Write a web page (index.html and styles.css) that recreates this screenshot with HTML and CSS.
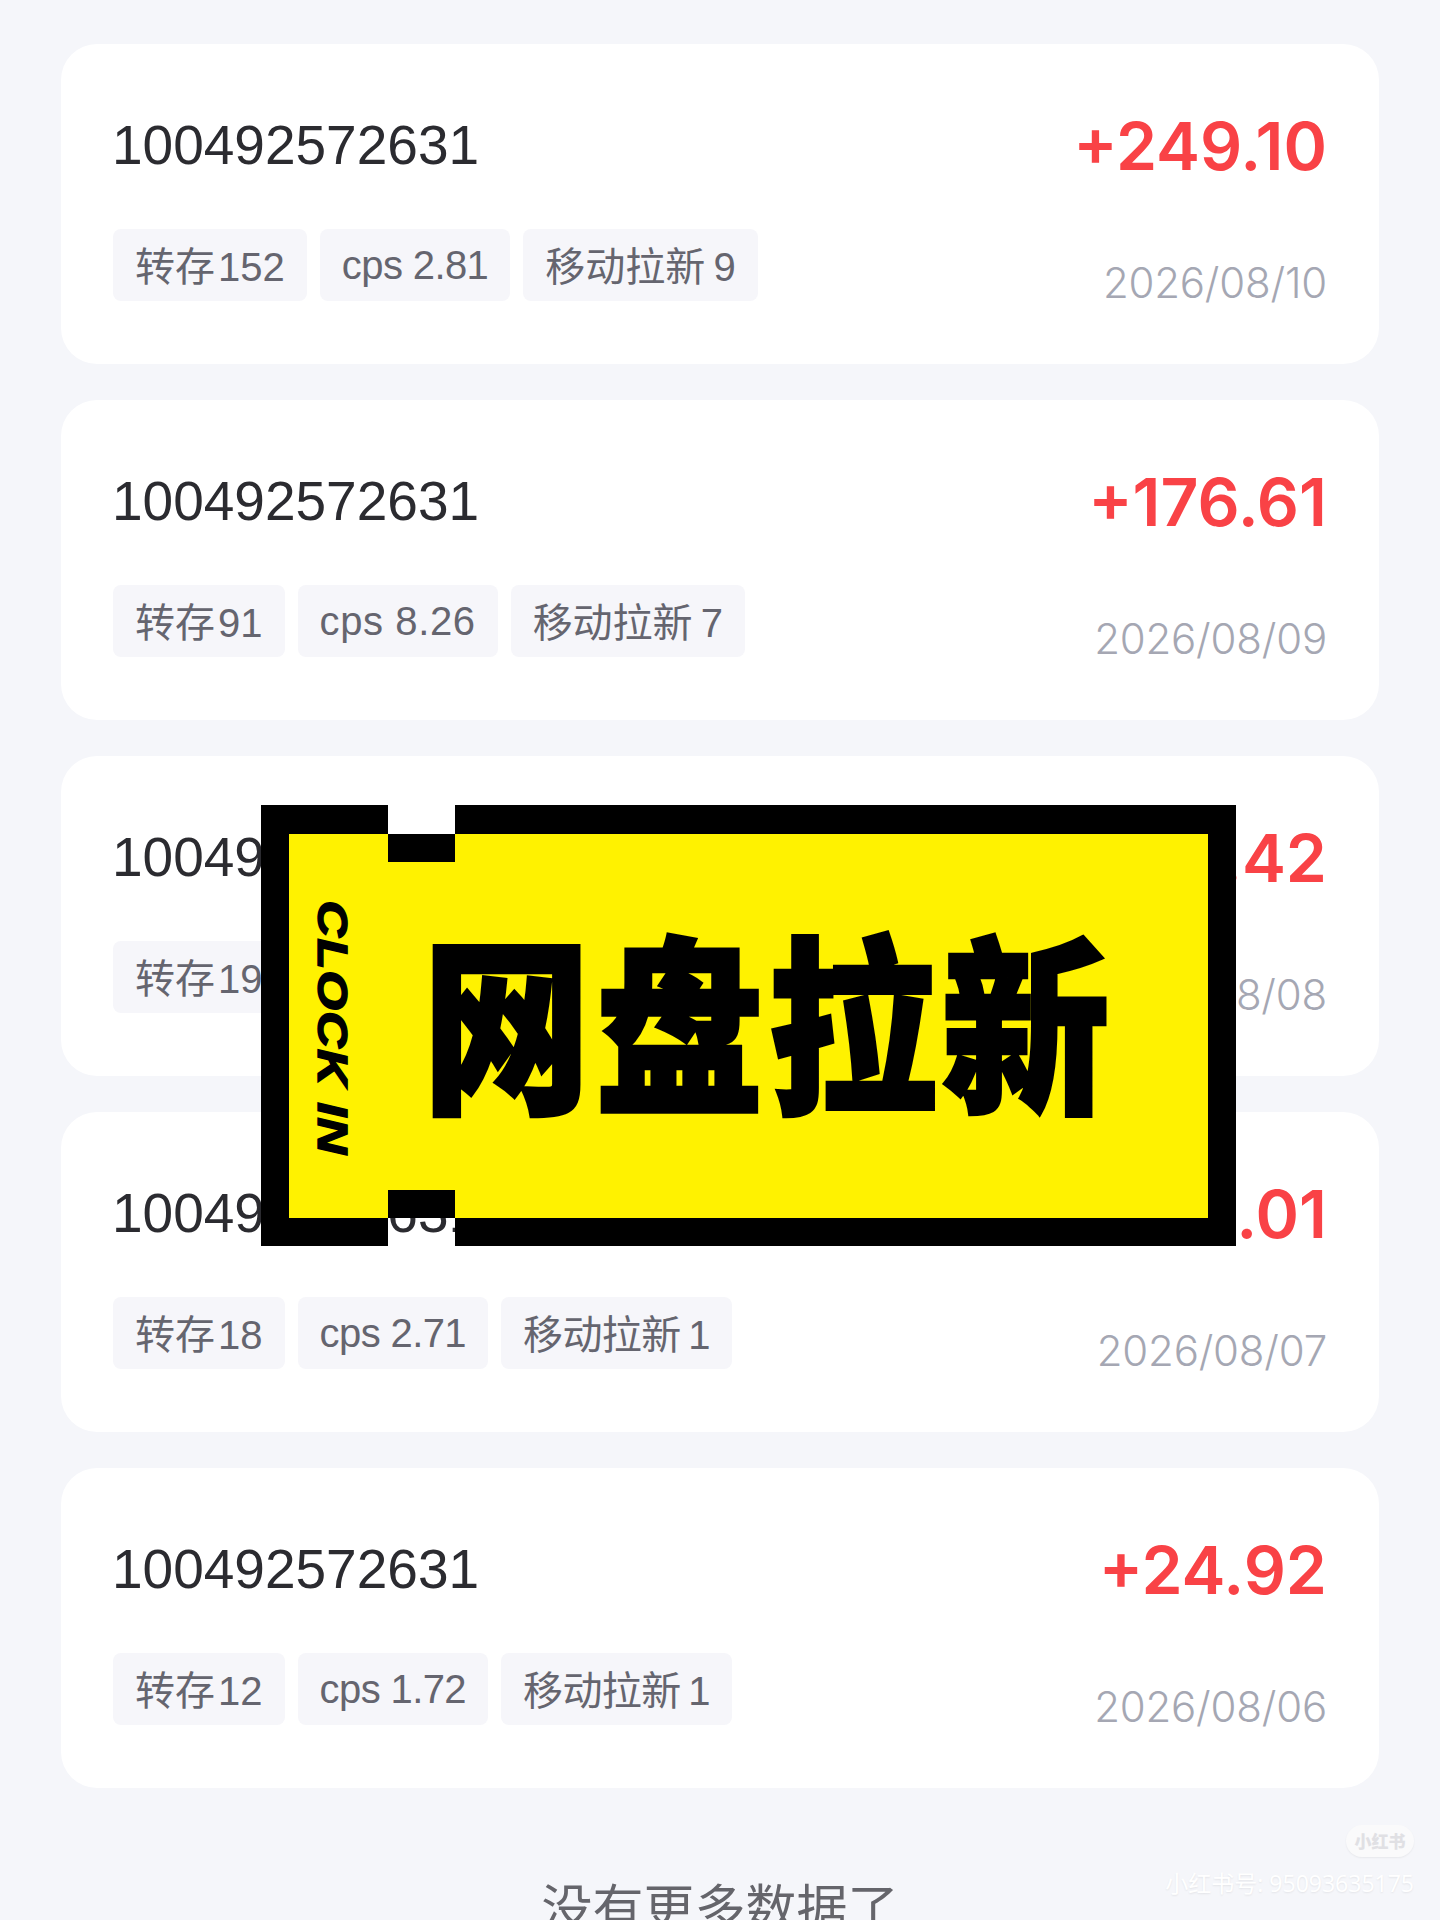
FILE: index.html
```html
<!DOCTYPE html>
<html lang="zh-CN">
<head>
    <meta charset="UTF-8">
    <meta name="viewport" content="width=device-width, initial-scale=1.0">
    <title>网盘拉新</title>
    <link rel="stylesheet" href="styles.css">
</head>
<body>
    <div class="page">
        <div class="list">
            <div class="card">
                <div class="row">
                    <span class="code">100492572631</span>
                    <span class="amount">+249.10</span>
                </div>
                <div class="row row-bottom">
                    <div class="tags">
                        <span class="tag tag-save">转存 152</span>
                        <span class="tag tag-cps tag-tight">cps 2.81</span>
                        <span class="tag tag-new">移动拉新 9</span>
                    </div>
                    <span class="date">2026/08/10</span>
                </div>
            </div>

            <div class="card">
                <div class="row">
                    <span class="code">100492572631</span>
                    <span class="amount">+176.61</span>
                </div>
                <div class="row row-bottom">
                    <div class="tags">
                        <span class="tag tag-save">转存 91</span>
                        <span class="tag tag-cps tag-wide">cps 8.26</span>
                        <span class="tag tag-new">移动拉新 7</span>
                    </div>
                    <span class="date">2026/08/09</span>
                </div>
            </div>

            <div class="card">
                <div class="row">
                    <span class="code">100492572631</span>
                    <span class="amount">+58.42</span>
                </div>
                <div class="row row-bottom">
                    <div class="tags">
                        <span class="tag tag-save">转存 19</span>
                        <span class="tag tag-cps">cps 3.07</span>
                        <span class="tag tag-new">移动拉新 2</span>
                    </div>
                    <span class="date">2026/08/08</span>
                </div>
            </div>

            <div class="card">
                <div class="row">
                    <span class="code">100492572631</span>
                    <span class="amount">+49.01</span>
                </div>
                <div class="row row-bottom">
                    <div class="tags">
                        <span class="tag tag-save">转存 18</span>
                        <span class="tag tag-cps tag-tight">cps 2.71</span>
                        <span class="tag tag-new tag-tight">移动拉新 1</span>
                    </div>
                    <span class="date">2026/08/07</span>
                </div>
            </div>

            <div class="card">
                <div class="row">
                    <span class="code">100492572631</span>
                    <span class="amount">+24.92</span>
                </div>
                <div class="row row-bottom">
                    <div class="tags">
                        <span class="tag tag-save">转存 12</span>
                        <span class="tag tag-cps tag-tight">cps 1.72</span>
                        <span class="tag tag-new tag-tight">移动拉新 1</span>
                    </div>
                    <span class="date">2026/08/06</span>
                </div>
            </div>
        </div>

        <div class="no-more">没有更多数据了</div>

        <!-- Ticket sticker over the list -->
        <div class="sticker">
            <div class="sticker-inner">
                <span class="notch notch-top"></span>
                <span class="notch notch-bottom"></span>
                <span class="clock-in">CLOCK IN</span>
                <span class="sticker-title">网盘拉新</span>
            </div>
        </div>

        <!-- Watermark -->
        <div class="mark-logo">小红书</div>
        <div class="mark-id">小红书号: 95093635175</div>
    </div>
</body>
</html>
```

FILE: styles.css
```css
/* Basic Styling */
body {
    margin: 0;
    background-color: #f5f6fa;
    font-family: 'Liberation Sans', 'Noto Sans CJK SC', sans-serif;
}

.page {
    position: relative;
    height: 1920px;
    overflow: hidden;
}

.list {
    display: flex;
    flex-direction: column;
    gap: 36px;
    padding: 44px 61px 0;
}

.card {
    height: 320px;
    box-sizing: border-box;
    padding: 62px 52px 0;
    background-color: #fff;
    border-radius: 36px;
}

.row {
    display: flex;
    justify-content: space-between;
    align-items: center;
    height: 78px;
}

.row-bottom {
    height: 72px;
    margin-top: 45px;
    align-items: flex-start;
}

.code {
    margin-left: -1px;
    font-size: 55px;
    color: #2b2b30;
}

.amount {
    margin-top: 2px;
    font-family: Inter, sans-serif;
    font-size: 66px;
    font-weight: 600;
    color: #f94246;
}

/* Tags */
.tags {
    display: flex;
    gap: 13px;
}

.tag {
    display: flex;
    align-items: center;
    height: 72px;
    box-sizing: border-box;
    padding: 0 22px 3px;
    border-radius: 8px;
    background-color: #f6f6fa;
    font-size: 40px;
    color: #65656f;
}

.tag-save {
    word-spacing: -8px;
}

.tag-new {
    word-spacing: -3px;
}

.tag-cps {
    padding-bottom: 0;
}

.tag-tight {
    letter-spacing: -0.6px;
}

.tag-wide {
    letter-spacing: 0.6px;
}

.date {
    margin-top: 28px;
    font-family: Inter, sans-serif;
    font-size: 42px;
    font-weight: 300;
    letter-spacing: -0.2px;
    color: #a5a7b3;
}

.no-more {
    margin-top: 92px;
    text-align: center;
    font-size: 51px;
    line-height: 60px;
    color: #65656b;
}

/* Sticker */
.sticker {
    position: absolute;
    left: 261px;
    top: 805px;
    width: 975px;
    height: 441px;
    box-sizing: border-box;
    padding: 29px 28px 28px;
    background-color: #000;
    clip-path: polygon(0 0, 127px 0, 127px 29px, 194px 29px, 194px 0, 100% 0, 100% 100%, 194px 100%, 194px 413px, 127px 413px, 127px 100%, 0 100%);
}

.sticker-inner {
    position: relative;
    display: flex;
    align-items: center;
    height: 100%;
    background-color: #fff200;
}

.notch {
    position: absolute;
    left: 99px;
    width: 67px;
    height: 28px;
    background-color: #000;
}

.notch-top {
    top: 0;
}

.notch-bottom {
    bottom: 0;
}

.clock-in {
    writing-mode: vertical-rl;
    margin: 4px 0 0 19px;
    font-family: 'Liberation Sans', sans-serif;
    font-size: 43px;
    font-weight: 700;
    font-style: italic;
    letter-spacing: 1px;
    -webkit-text-stroke: 1.5px #000;
    color: #000;
    transform: scaleY(1.18);
}

.sticker-title {
    margin: 0 0 20px 66px;
    font-family: 'Noto Sans CJK SC', sans-serif;
    font-size: 167px;
    line-height: 1;
    font-weight: 900;
    letter-spacing: 6px;
    -webkit-text-stroke: 4px #000;
    color: #000;
    transform: scaleY(1.13);
}

/* Watermark */
.mark-logo {
    position: absolute;
    left: 1346px;
    top: 1825px;
    width: 68px;
    height: 32px;
    border-radius: 16px;
    background-color: #fafafb;
    box-shadow: 0 1px 2px rgba(0, 0, 0, 0.06);
    font-family: 'Noto Sans CJK SC', sans-serif;
    font-size: 17px;
    font-weight: 900;
    line-height: 32px;
    text-align: center;
    color: #e0e0e4;
}

.mark-id {
    position: absolute;
    right: 26px;
    top: 1869px;
    font-family: 'Open Sans', 'Noto Sans CJK SC', sans-serif;
    font-size: 23px;
    line-height: 28px;
    color: #fff;
    text-shadow: 0 1px 2px rgba(0, 0, 0, 0.08);
}
```
